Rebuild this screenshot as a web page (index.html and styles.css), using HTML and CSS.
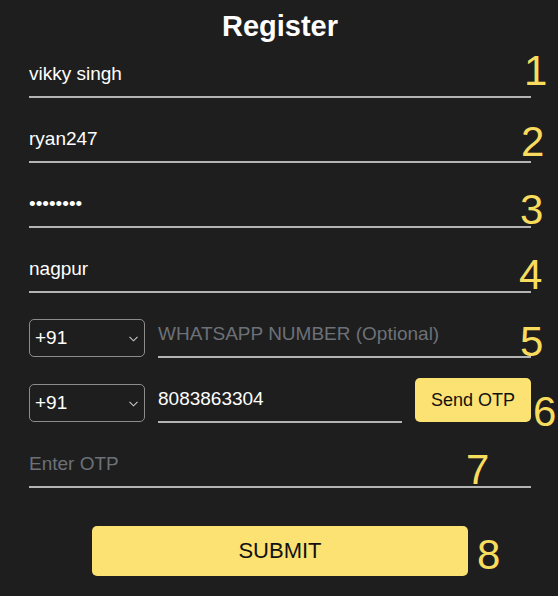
FILE: index.html
```html
<!DOCTYPE html>
<html lang="en">
<head>
<meta charset="utf-8">
<title>Register</title>
<link rel="stylesheet" href="styles.css">
</head>
<body>
<main class="page">
  <h1 class="title">Register</h1>
  <form class="form">
    <div class="row"><input class="field" type="text" value="vikky singh"></div>
    <div class="row"><input class="field" type="text" value="ryan247"></div>
    <div class="row"><input class="field" type="password" value="12345678"></div>
    <div class="row"><input class="field" type="text" value="nagpur"></div>
    <div class="row row-phone">
      <div class="select"><span>+91</span>
        <svg class="chev" width="9" height="6" viewBox="0 0 9 6"><path d="M0.5 0.8 L4.5 4.8 L8.5 0.8" fill="none" stroke="#c8c8c8" stroke-width="1.1"/></svg>
      </div>
      <input class="field" type="text" placeholder="WHATSAPP NUMBER (Optional)">
    </div>
    <div class="row row-phone row-otp">
      <div class="select"><span>+91</span>
        <svg class="chev" width="9" height="6" viewBox="0 0 9 6"><path d="M0.5 0.8 L4.5 4.8 L8.5 0.8" fill="none" stroke="#c8c8c8" stroke-width="1.1"/></svg>
      </div>
      <input class="field" type="text" value="8083863304">
      <button type="button" class="send-btn">Send OTP</button>
    </div>
    <div class="row"><input class="field" type="text" placeholder="Enter OTP"></div>
    <div class="submit-row"><button type="button" class="submit-btn">SUBMIT</button></div>
  </form>
  <span class="num n1">1</span>
  <span class="num n2">2</span>
  <span class="num n3">3</span>
  <span class="num n4">4</span>
  <span class="num n5">5</span>
  <span class="num n6">6</span>
  <span class="num n7">7</span>
  <span class="num n8">8</span>
</main>
</body>
</html>
```
FILE: styles.css
```css
* { box-sizing: border-box; }
html, body {
  margin: 0;
  padding: 0;
  background: #1e1e1e;
}
body {
  font-family: "Liberation Sans", Arial, sans-serif;
  color: #fff;
  width: 558px;
  height: 596px;
  overflow: hidden;
}
.page {
  position: relative;
  padding: 10px 27px 0 29px;
}
.title {
  margin: 0 0 16px;
  font-size: 29px;
  line-height: 32px;
  font-weight: 700;
  text-align: center;
  color: #fff;
}
.form {
  display: flex;
  flex-direction: column;
  gap: 25px;
  margin: 0;
}
.row {
  display: flex;
  align-items: center;
  height: 40px;
}
.field {
  flex: 1;
  min-width: 0;
  height: 40px;
  padding: 0 0 6px 0;
  margin: 0;
  border: none;
  border-bottom: 2px solid #b4b4b4;
  background: transparent;
  color: #fff;
  font-family: "Liberation Sans", Arial, sans-serif;
  font-size: 19px;
  outline: none;
}
.field::placeholder { color: #6c7178; }
.row-phone { gap: 13px; }
.row-otp { align-items: flex-end; }
.select {
  width: 116px;
  height: 38px;
  flex: none;
  border: 1px solid #8c8c8c;
  border-radius: 5px;
  display: flex;
  align-items: center;
  justify-content: space-between;
  padding: 0 6px 0 5px;
  font-size: 19px;
  color: #fff;
}
.row-otp .select { margin-bottom: 1px; }
.chev { display: block; margin-top: 1px; }
.send-btn {
  flex: none;
  width: 116px;
  height: 44px;
  margin: 0 0 1px;
  border: none;
  border-radius: 5px;
  background: #fbe272;
  color: #111;
  font-family: "Liberation Sans", Arial, sans-serif;
  font-size: 18px;
  padding: 0;
}
.submit-row {
  display: flex;
  justify-content: center;
  margin-top: 13px;
}
.submit-btn {
  width: 376px;
  height: 50px;
  border: none;
  border-radius: 5px;
  background: #fbe272;
  color: #111;
  font-family: "Liberation Sans", Arial, sans-serif;
  font-size: 22px;
  padding: 0;
}
.num {
  position: absolute;
  font-family: "Liberation Sans", Arial, sans-serif;
  font-size: 42px;
  line-height: 42px;
  color: #f8dc5e;
}
.n1 { left: 524px; top: 50px; }
.n2 { left: 521px; top: 121px; }
.n3 { left: 520px; top: 189px; }
.n4 { left: 519px; top: 254px; }
.n5 { left: 520px; top: 321px; }
.n6 { left: 533px; top: 391px; }
.n7 { left: 466px; top: 449px; }
.n8 { left: 477px; top: 534px; }
```
